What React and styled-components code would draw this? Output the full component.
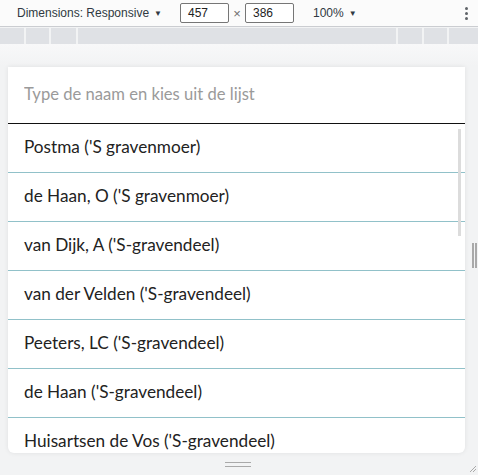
import React from "react";
import styled, { createGlobalStyle } from "styled-components";

const GlobalStyle = createGlobalStyle`
  html, body {
    margin: 0;
    padding: 0;
    background: #f2f3f4;
    overflow: hidden;
  }
  * { box-sizing: border-box; }
`;

const Shell = styled.div`
  width: 478px;
  height: 475px;
  display: flex;
  flex-direction: column;
  font-family: "Liberation Sans", Arial, sans-serif;
`;

const Toolbar = styled.div`
  height: 27px;
  flex: none;
  display: flex;
  align-items: center;
  background: #fbfbfb;
  border-bottom: 1px solid #cbcdd1;
  padding-left: 17px;
  font-size: 12px;
  color: #303942;
`;

const Caret = styled.span`
  font-size: 8px;
  margin-left: 5px;
`;

const SizeBox = styled.div`
  width: 49px;
  height: 20px;
  border: 1px solid #767676;
  border-radius: 2px;
  background: #fff;
  padding-left: 7px;
  display: flex;
  align-items: center;
  font-size: 12px;
  color: #222;
`;

const Times = styled.span`
  width: 16px;
  text-align: center;
  color: #6e6e6e;
  font-size: 13px;
`;

const Zoom = styled.div`
  margin-left: 19px;
  display: flex;
  align-items: center;
`;

const Kebab = styled.div`
  margin-left: auto;
  margin-right: 10px;
  display: flex;
  flex-direction: column;
  gap: 2px;
  & > i {
    width: 3px;
    height: 3px;
    border-radius: 50%;
    background: #5f6368;
  }
`;

const Ruler = styled.div`
  margin-top: 1px;
  height: 16px;
  flex: none;
  display: flex;
  gap: 2px;
`;

const RulerCell = styled.div`
  height: 100%;
  background: #dfe1e5;
  width: ${(p) => (p.$w ? `${p.$w}px` : "auto")};
  flex: ${(p) => (p.$w ? "none" : 1)};
`;

const Stage = styled.div`
  flex: 1;
  display: flex;
  padding-top: 23px;
  background: linear-gradient(#f8f8f9, #f2f3f4 22px);
`;

const Gutter = styled.div`
  width: 8px;
  flex: none;
`;

const Viewport = styled.div`
  position: relative;
  width: 457px;
  height: 386px;
  flex: none;
  background: #fff;
  overflow: hidden;
  border-radius: 0 0 6px 6px;
  box-shadow: 0 0 5px rgba(0, 0, 0, 0.08);
  font-family: Lato, "Noto Sans", sans-serif;
`;

const SideHandle = styled.div`
  flex: 1;
  display: flex;
  align-items: center;
  justify-content: flex-end;
  padding-right: 1px;
  & > div {
    display: flex;
    gap: 1px;
    margin-top: -10px;
  }
  & i {
    width: 2px;
    height: 25px;
    background: #a9a9a9;
  }
`;

const Search = styled.input`
  display: block;
  width: 100%;
  height: 57px;
  border: none;
  border-bottom: 1px solid #111;
  padding: 0 16px 3px;
  font-family: inherit;
  font-size: 16.6px;
  color: #222;
  outline: none;
  &::placeholder {
    color: #9a9a9a;
  }
`;

const List = styled.ul`
  list-style: none;
  margin: 0;
  padding: 0;
`;

const Item = styled.li`
  height: 49px;
  display: flex;
  align-items: center;
  padding: 0 0 4px 16px;
  border-bottom: 1px solid #91c1c9;
  font-size: 17.2px;
  color: #222;
`;

const Thumb = styled.div`
  position: absolute;
  right: 4px;
  top: 62px;
  width: 3px;
  height: 107px;
  background: #dcdcdc;
`;

const BottomBar = styled.div`
  height: 22px;
  flex: none;
  position: relative;
  display: flex;
  align-items: center;
  justify-content: center;
  & > div {
    width: 26px;
    height: 5px;
    border-top: 1px solid #a9a9a9;
    border-bottom: 1px solid #a9a9a9;
    margin-left: -3px;
  }
`;

const Corner = styled.svg`
  position: absolute;
  right: 1px;
  bottom: 2px;
`;

const names = [
  "Postma ('S gravenmoer)",
  "de Haan, O ('S gravenmoer)",
  "van Dijk, A ('S-gravendeel)",
  "van der Velden ('S-gravendeel)",
  "Peeters, LC ('S-gravendeel)",
  "de Haan ('S-gravendeel)",
  "Huisartsen de Vos ('S-gravendeel)",
];

export default function App() {
  return (
    <Shell>
      <GlobalStyle />
      <Toolbar>
        <span>Dimensions: Responsive</span>
        <Caret>▼</Caret>
        <SizeBox style={{ marginLeft: 18 }}>457</SizeBox>
        <Times>×</Times>
        <SizeBox>386</SizeBox>
        <Zoom>
          100%<Caret>▼</Caret>
        </Zoom>
        <Kebab>
          <i />
          <i />
          <i />
        </Kebab>
      </Toolbar>
      <Ruler>
        <RulerCell $w={24} />
        <RulerCell $w={23} />
        <RulerCell $w={25} />
        <RulerCell />
        <RulerCell $w={24} />
        <RulerCell $w={23} />
        <RulerCell $w={29} />
      </Ruler>
      <Stage>
        <Gutter />
        <Viewport>
          <Search placeholder="Type de naam en kies uit de lijst" />
          <List>
            {names.map((n) => (
              <Item key={n}>{n}</Item>
            ))}
          </List>
          <Thumb />
        </Viewport>
        <SideHandle>
          <div>
            <i />
            <i />
          </div>
        </SideHandle>
      </Stage>
      <BottomBar>
        <div />
        <Corner width="8" height="8" viewBox="0 0 8 8">
          <path d="M1 7 L7 1 M4 7 L7 4" stroke="#a9a9a9" strokeWidth="1" />
        </Corner>
      </BottomBar>
    </Shell>
  );
}
